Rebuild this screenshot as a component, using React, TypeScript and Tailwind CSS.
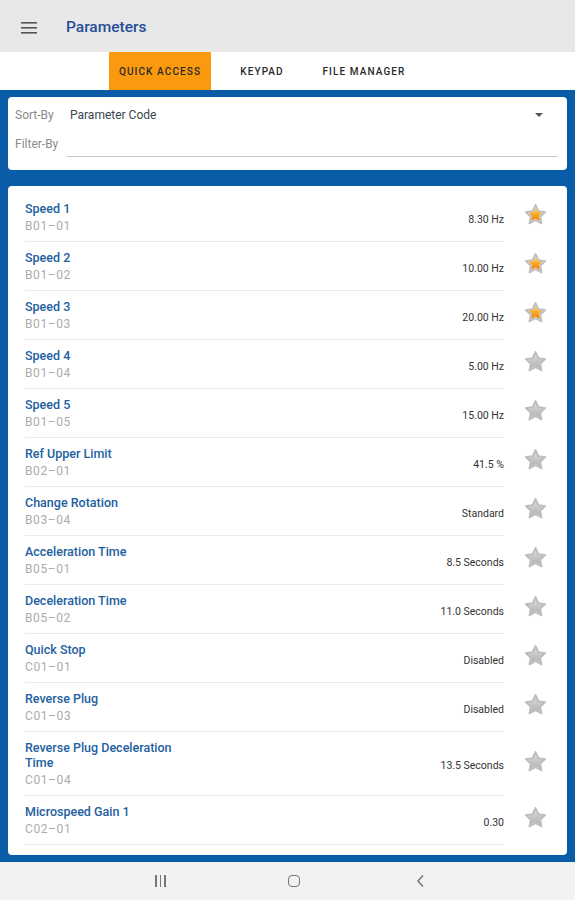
import React from "react";

interface IParam {
  name: string;
  code: string;
  value: string;
  fav: boolean;
}

const params: IParam[] = [
  { name: "Speed 1", code: "B01–01", value: "8.30 Hz", fav: true },
  { name: "Speed 2", code: "B01–02", value: "10.00 Hz", fav: true },
  { name: "Speed 3", code: "B01–03", value: "20.00 Hz", fav: true },
  { name: "Speed 4", code: "B01–04", value: "5.00 Hz", fav: false },
  { name: "Speed 5", code: "B01–05", value: "15.00 Hz", fav: false },
  { name: "Ref Upper Limit", code: "B02–01", value: "41.5 %", fav: false },
  { name: "Change Rotation", code: "B03–04", value: "Standard", fav: false },
  { name: "Acceleration Time", code: "B05–01", value: "8.5 Seconds", fav: false },
  { name: "Deceleration Time", code: "B05–02", value: "11.0 Seconds", fav: false },
  { name: "Quick Stop", code: "C01–01", value: "Disabled", fav: false },
  { name: "Reverse Plug", code: "C01–03", value: "Disabled", fav: false },
  { name: "Reverse Plug Deceleration Time", code: "C01–04", value: "13.5 Seconds", fav: false },
  { name: "Microspeed Gain 1", code: "C02–01", value: "0.30", fav: false },
];

const Star = ({ fav, id }: { fav: boolean; id: string }) => (
  <svg width="25" height="25" viewBox="0 0 24 24">
    <defs>
      <linearGradient id={id} x1="0" y1="0" x2="0" y2="1">
        {fav ? (
          <>
            <stop offset="0" stopColor="#ffd54f" />
            <stop offset="1" stopColor="#f57c00" />
          </>
        ) : (
          <>
            <stop offset="0" stopColor="#d9d9d9" />
            <stop offset="1" stopColor="#b3b3b3" />
          </>
        )}
      </linearGradient>
    </defs>
    <path
      d="M12 2.2l2.9 6.1 6.6.8-4.9 4.6 1.3 6.6L12 17l-5.9 3.3 1.3-6.6-4.9-4.6 6.6-.8z"
      fill={fav ? "#d4d4d4" : "#c4c4c4"}
      stroke="#bdbdbd"
      strokeWidth="1.6"
      strokeLinejoin="round"
    />
    <path
      d="M12 5.2l2 4.2 4.5.5-3.3 3.1.9 4.5L12 15.3l-4.1 2.2.9-4.5-3.3-3.1 4.5-.5z"
      fill={`url(#${id})`}
    />
  </svg>
);

const Row = ({ p, i }: { p: IParam; i: number }) => (
  <div className="relative ml-[17px] mr-[63px] flex items-center border-b border-[#ececec] pt-[8px] pb-[7px]">
    <div className="min-w-0 flex-1">
      <div className="max-w-[170px] text-[12.5px] font-medium leading-[15px] text-[#22609f]">
        {p.name}
      </div>
      <div className="mt-[2px] text-[12px] leading-[16px] tracking-[0.6px] text-[#ababab]">
        {p.code}
      </div>
    </div>
    <div className="pt-[4px] text-[10.5px] text-[#333]">{p.value}</div>
    <div className="absolute right-[-44px] top-1/2 mt-[-2px] -translate-y-1/2">
      <Star fav={p.fav} id={`g${i}`} />
    </div>
  </div>
);

export default function App() {
  return (
    <div
      className="flex h-[900px] w-[575px] flex-col bg-[#0a5ca8]"
      style={{ fontFamily: "Roboto, 'Noto Sans', sans-serif" }}
    >
      <div className="flex h-[52px] items-center bg-[#e8e8e8] pt-[3px]">
        <svg width="18" height="14" viewBox="0 0 18 14" className="ml-[21px]">
          <rect x="0" y="1" width="16" height="1.6" fill="#555" />
          <rect x="0" y="6" width="16" height="1.6" fill="#555" />
          <rect x="0" y="11" width="16" height="1.6" fill="#555" />
        </svg>
        <span className="ml-[27px] text-[15.5px] font-medium text-[#274d97]">Parameters</span>
      </div>

      <div className="flex h-[38px] bg-white pl-[109px] text-[10px] font-medium tracking-[1.1px] text-[#2a2a2a]">
        <div className="flex w-[102px] items-center justify-center bg-[#fb9a0e]">QUICK ACCESS</div>
        <div className="flex w-[102px] items-center justify-center">KEYPAD</div>
        <div className="flex w-[102px] items-center justify-center">FILE MANAGER</div>
      </div>

      <div className="mx-[8px] mt-[7px] h-[73px] rounded-[4px] bg-white px-[7px] pt-[9px]">
        <div className="flex h-[18px] items-center text-[12px]">
          <span className="w-[55px] text-[#8a8a8a]">Sort-By</span>
          <span className="flex-1 text-[#37474f]">Parameter Code</span>
          <svg width="10" height="6" viewBox="0 0 10 6" className="mr-[16px]">
            <path d="M1 1l4 4 4-4z" fill="#555" />
          </svg>
        </div>
        <div className="mt-[11px] flex items-end text-[12px]">
          <span className="w-[52px] text-[#8a8a8a]">Filter-By</span>
          <div className="mr-[2px] mb-[-4px] h-[18px] flex-1 border-b border-[#c8c8c8]"></div>
        </div>
      </div>

      <div className="mx-[8px] mt-[16px] rounded-[4px] bg-white pt-[7px] pb-[10px]">
        {params.map((p, i) => (
          <Row key={p.code} p={p} i={i} />
        ))}
      </div>

      <div className="mt-auto flex h-[38px] items-center bg-[#f2f2f2]">
        <div className="ml-[155px] flex gap-[3px]">
          <div className="h-[12px] w-[1.5px] bg-[#777]"></div>
          <div className="h-[12px] w-[1.5px] bg-[#777]"></div>
          <div className="h-[12px] w-[1.5px] bg-[#777]"></div>
        </div>
        <div className="ml-[122px] h-[12px] w-[12px] rounded-[4px] border-[1.5px] border-[#777]"></div>
        <svg width="10" height="14" viewBox="0 0 10 14" className="ml-[116px]">
          <path d="M7 1.5L2 7l5 5.5" stroke="#777" strokeWidth="1.5" fill="none" />
        </svg>
      </div>
    </div>
  );
}
